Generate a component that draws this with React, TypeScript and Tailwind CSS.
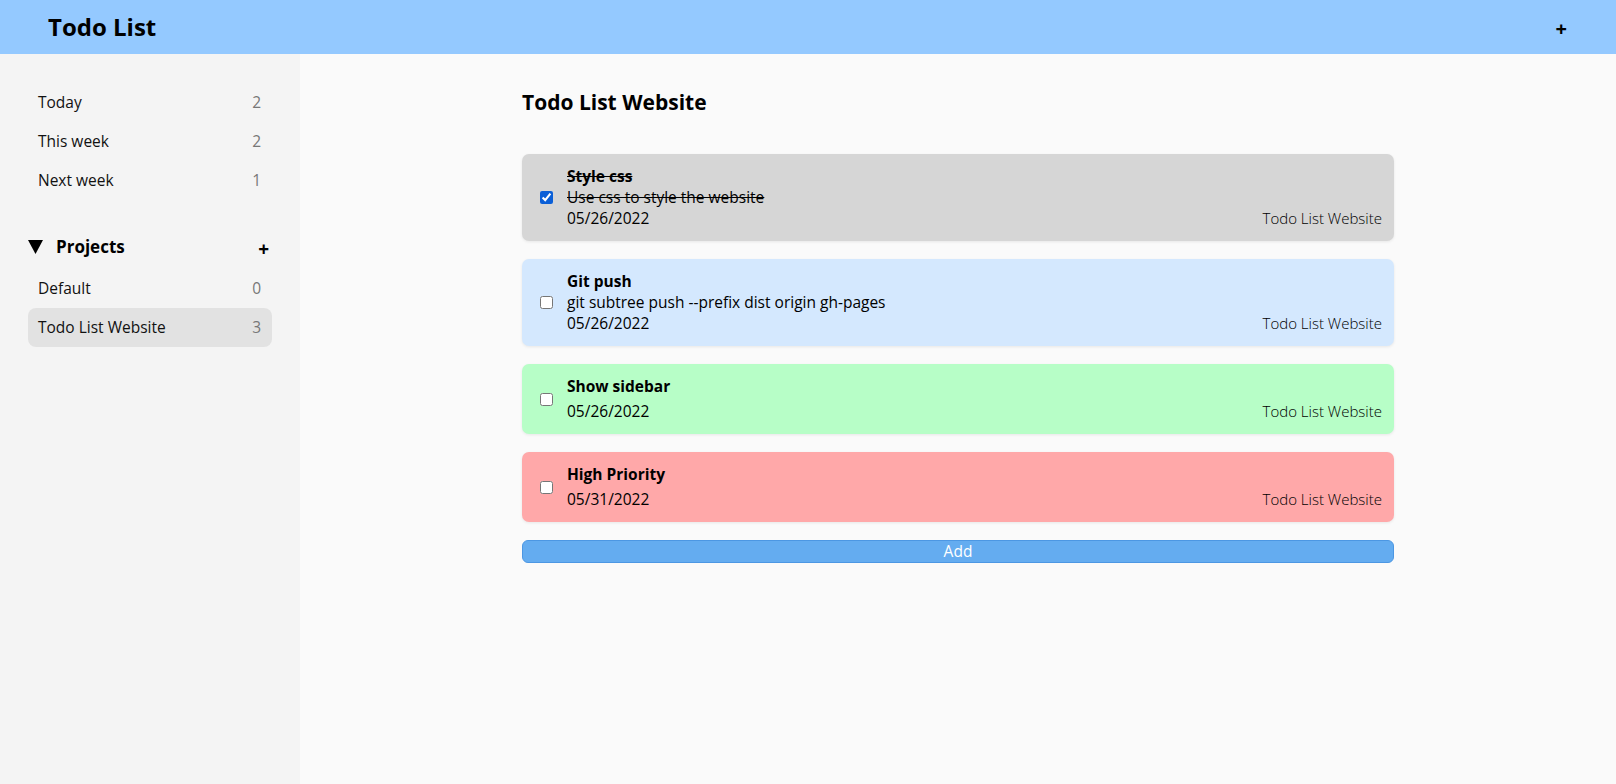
import React from "react";

const font = { fontFamily: '"Open Sans", "Noto Sans", sans-serif' };

type Todo = {
  title: string;
  desc?: string;
  date: string;
  bg: string;
  done?: boolean;
};

const todos: Todo[] = [
  { title: "Style css", desc: "Use css to style the website", date: "05/26/2022", bg: "bg-[#d6d6d6]", done: true },
  { title: "Git push", desc: "git subtree push --prefix dist origin gh-pages", date: "05/26/2022", bg: "bg-[#d4e8fe]" },
  { title: "Show sidebar", date: "05/26/2022", bg: "bg-[#b7fec7]" },
  { title: "High Priority", date: "05/31/2022", bg: "bg-[#ffa8a9]" },
];

function SideItem({ label, count, active }: { label: string; count: number; active?: boolean }) {
  return (
    <div
      className={`h-[39px] flex items-center justify-between pl-[10px] pr-[11px] rounded-[8px] text-[15.5px] text-[#111] ${
        active ? "bg-[#e2e2e2]" : ""
      }`}
    >
      <span>{label}</span>
      <span className="text-[#777]">{count}</span>
    </div>
  );
}

export default function App() {
  return (
    <div className="h-screen flex flex-col" style={font}>
      <header className="h-[54px] shrink-0 bg-[#94c9ff] flex items-center justify-between pl-[48px] pr-[49px]">
        <h1 className="text-[24px] font-bold text-black leading-none">Todo List</h1>
        <span className="text-[20px] font-bold text-black leading-none mt-[4px]">+</span>
      </header>
      <div className="flex flex-1 min-h-0">
        <aside className="w-[300px] shrink-0 bg-[#f4f4f4] pt-[29px] px-[28px]">
          <SideItem label="Today" count={2} />
          <SideItem label="This week" count={2} />
          <SideItem label="Next week" count={1} />
          <div className="mt-[28px] h-[38px] flex items-center justify-between">
            <div className="flex items-center">
              <svg width="15" height="14" viewBox="0 0 15 14" className="mr-[13px]">
                <polygon points="0,0 15,0 7.5,14" fill="#000" />
              </svg>
              <span className="text-[17px] font-bold text-black">Projects</span>
            </div>
            <span className="text-[19px] font-bold text-black leading-none mr-[3px] mt-[4px]">+</span>
          </div>
          <div className="mt-[3px]">
            <SideItem label="Default" count={0} />
            <SideItem label="Todo List Website" count={3} active />
          </div>
        </aside>
        <main className="flex-1 bg-[#fafafa]">
          <div className="w-[872px] mx-auto pt-[34px]">
            <h2 className="text-[21px] font-bold text-black leading-[28px]">Todo List Website</h2>
            <div className="mt-[38px] flex flex-col gap-[18px]">
              {todos.map((t) => (
                <div
                  key={t.title}
                  className={`${t.bg} rounded-[7px] shadow-[0_1px_3px_rgba(0,0,0,0.08)] flex items-center pl-[18px] pr-[12px] pt-[12px] pb-[12px]`}
                >
                  <input
                    type="checkbox"
                    defaultChecked={t.done}
                    className="m-0 w-[13px] h-[13px] shrink-0 accent-[#0b5fd7]"
                  />
                  <div className="flex-1 ml-[14px] text-[15.5px] leading-[21px] text-black">
                    <div className={`font-bold ${t.done ? "line-through" : ""}`}>{t.title}</div>
                    {t.desc ? (
                      <div className={t.done ? "line-through" : ""}>{t.desc}</div>
                    ) : (
                      <div className="h-[4px]" />
                    )}
                    <div className="flex justify-between items-baseline">
                      <span>{t.date}</span>
                      <span className="font-light text-[15px] text-black">Todo List Website</span>
                    </div>
                  </div>
                </div>
              ))}
              <button className="h-[23px] bg-[#64acf0] border border-[#4c97e3] rounded-[6px] text-white text-[15.5px] leading-none flex items-center justify-center">
                Add
              </button>
            </div>
          </div>
        </main>
      </div>
    </div>
  );
}
